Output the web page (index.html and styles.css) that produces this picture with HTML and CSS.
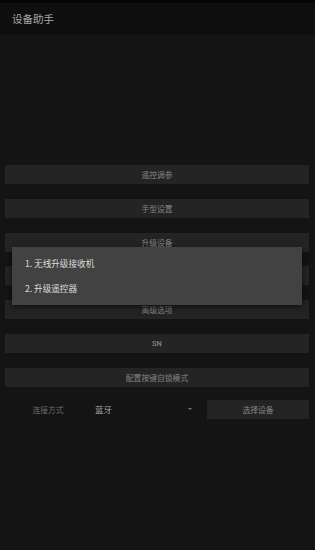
FILE: index.html
```html
<!DOCTYPE html>
<html lang="zh">
<head>
<meta charset="utf-8">
<title>设备助手</title>
<link rel="stylesheet" href="styles.css">
</head>
<body>
<div class="screen">
  <div class="status"></div>
  <header class="appbar">设备助手</header>
  <main class="content">
    <div class="btn">遥控调参</div>
    <div class="btn">手型设置</div>
    <div class="btn">升级设备</div>
    <div class="btn">固件信息</div>
    <div class="btn">高级选项</div>
    <div class="btn sn">SN</div>
    <div class="btn">配置按键自锁模式</div>
    <div class="row">
      <span class="label">连接方式</span>
      <span class="select"><span class="value">蓝牙</span><span class="arrow"></span></span>
      <div class="btn pick">选择设备</div>
    </div>
  </main>
  <div class="dialog">
    <div class="item">1. 无线升级接收机</div>
    <div class="item">2. 升级遥控器</div>
  </div>
</div>
</body>
</html>
```
FILE: styles.css
```css
html, body {
  margin: 0;
  padding: 0;
  background: #141414;
}
.screen {
  position: relative;
  width: 315px;
  height: 550px;
  background: #141414;
  font-family: "Noto Sans CJK SC", "Noto Sans", sans-serif;
  overflow: hidden;
}
.status {
  height: 3px;
  background: #050505;
}
.appbar {
  height: 32px;
  background: #0f0f0f;
  color: #a8a8a8;
  font-size: 10.5px;
  line-height: 32px;
  padding-left: 12px;
}
.content {
  display: flex;
  flex-direction: column;
  gap: 14.8px;
  padding: 130px 6px 0 5px;
}
.btn {
  height: 19px;
  background: #242424;
  color: #848484;
  font-size: 7.8px;
  line-height: 19px;
  text-align: center;
}
.sn {
  font-family: "Roboto", "Noto Sans", sans-serif;
  font-weight: 500;
  font-size: 7.5px;
}
.row {
  display: flex;
  align-items: center;
  height: 19px;
  margin-top: -2px;
}
.label {
  width: 86px;
  text-align: center;
  color: #6e6e6e;
  font-size: 7.8px;
}
.select {
  display: flex;
  align-items: center;
  width: 116px;
  padding-left: 4px;
  box-sizing: border-box;
}
.value {
  color: #a8a8a8;
  font-size: 8.5px;
  flex: 1;
}
.arrow {
  width: 0;
  height: 0;
  border-left: 2.5px solid transparent;
  border-right: 2.5px solid transparent;
  border-top: 2.5px solid #777;
  margin-right: 15px;
}
.pick {
  flex: 1;
}
.dialog {
  position: absolute;
  left: 12px;
  top: 247px;
  width: 290px;
  height: 58px;
  background: #424242;
  box-shadow: 0 2px 6px rgba(0,0,0,0.6);
  display: flex;
  flex-direction: column;
  justify-content: center;
}
.item {
  height: 25px;
  line-height: 25px;
  padding-left: 13px;
  color: #dcdcdc;
  font-size: 8.6px;
}
```
